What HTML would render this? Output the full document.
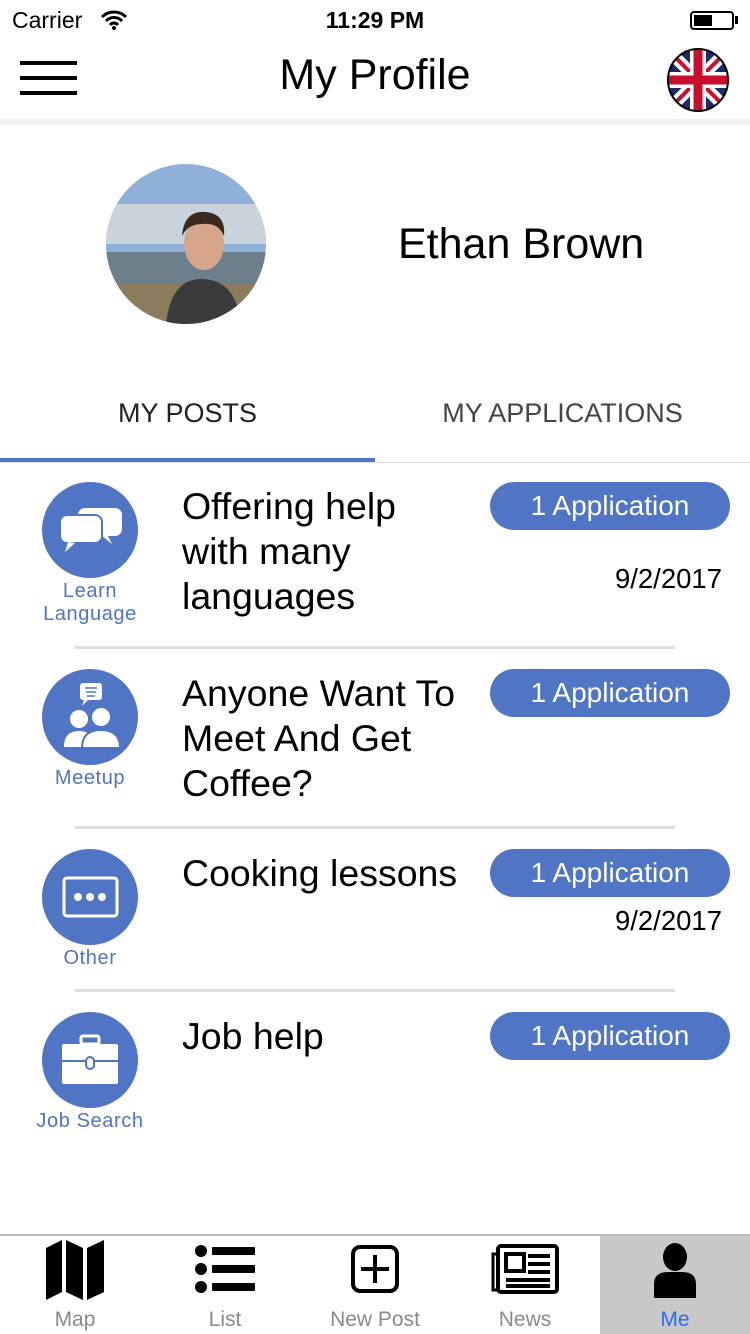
<!DOCTYPE html>
<html><head><meta charset="utf-8"><style>
*{margin:0;padding:0;box-sizing:border-box}
body{width:750px;height:1334px;position:relative;background:#fff;font-family:"Liberation Sans",sans-serif;overflow:hidden}
.a{position:absolute}
.circ{position:absolute;left:42px;width:96px;height:96px;border-radius:50%;background:#5075c4}
.circ svg{position:absolute;left:0;top:0}
.lbl{position:absolute;width:180px;left:0;text-align:center;color:#5075c4;font-size:20px;line-height:23px;letter-spacing:0.6px}
.ttl{position:absolute;left:182px;font-size:37.5px;line-height:45px;color:#000}
.pill{position:absolute;left:490px;width:240px;height:48px;border-radius:24px;background:#5075c4;color:#fff;font-size:28px;line-height:48px;text-align:center}
.date{position:absolute;right:28px;font-size:27.5px}
.sep{position:absolute;left:75px;width:600px;height:3px;background:#dedede}
.tab{position:absolute;top:1236px;width:150px;height:98px;text-align:center}
.tab span{position:absolute;left:0;right:0;top:72px;font-size:21px;color:#8a8a8a}
</style></head><body>
<div class="a" style="left:12px;top:7px;font-size:23px">Carrier</div>
<svg class="a" style="left:100px;top:10px" width="28" height="20" viewBox="0 0 28 20"><path d="M2 7a17 17 0 0 1 24 0M6 11a11 11 0 0 1 16 0M10 15a5 5 0 0 1 8 0" stroke="#000" stroke-width="3" fill="none"/><circle cx="14" cy="18" r="2"/></svg>
<div class="a" style="left:0;width:750px;top:7px;text-align:center;font-size:23px;font-weight:bold">11:29 PM</div>
<div class="a" style="left:690px;top:11px;width:44px;height:19px;border:2px solid #000;border-radius:4px"><div style="position:absolute;left:2px;top:2px;width:18px;height:11px;background:#000"></div></div>
<div class="a" style="left:735px;top:16px;width:3px;height:8px;background:#000"></div>
<div class="a" style="left:20px;top:61px;width:57px;height:4px;background:#000"></div>
<div class="a" style="left:20px;top:76px;width:57px;height:4px;background:#000"></div>
<div class="a" style="left:20px;top:91px;width:57px;height:4px;background:#000"></div>
<div class="a" style="left:0;width:750px;top:51px;text-align:center;font-size:43px">My Profile</div>
<svg class="a" style="left:666px;top:48px" width="64" height="64" viewBox="0 0 64 64"><defs><clipPath id="c"><ellipse cx="32" cy="32" rx="30" ry="31"/></clipPath></defs><g clip-path="url(#c)"><rect width="64" height="64" fill="#1b2a6b"/><path d="M0 0L64 64M64 0L0 64" stroke="#fff" stroke-width="12"/><path d="M0 0L64 64M64 0L0 64" stroke="#c8102e" stroke-width="4"/><path d="M32 0V64M0 32H64" stroke="#fff" stroke-width="16"/><path d="M32 0V64M0 32H64" stroke="#c8102e" stroke-width="9"/></g><ellipse cx="32" cy="32" rx="30" ry="31" fill="none" stroke="#000" stroke-width="2"/></svg>
<div class="a" style="left:0;top:119px;width:750px;height:6px;background:#f2f2f2"></div>
<svg class="a" style="left:106px;top:164px" width="160" height="160" viewBox="0 0 160 160"><defs><clipPath id="av"><circle cx="80" cy="80" r="80"/></clipPath></defs><g clip-path="url(#av)"><rect width="160" height="160" fill="#8fb0d8"/><rect y="40" width="160" height="40" fill="#c9d3dc"/><rect y="88" width="160" height="72" fill="#6e7f8c"/><rect y="120" width="160" height="40" fill="#8a7c5c"/><path d="M60 160q5-45 35-45q35 0 40 45z" fill="#3b3b3e"/><ellipse cx="98" cy="80" rx="20" ry="26" fill="#d6a58a"/><path d="M76 72q2-26 24-24q20 2 18 24q-6-14-22-12q-14 0-20 12z" fill="#3a2a20"/></g></svg>
<div class="a" style="left:398px;top:220px;font-size:43px">Ethan Brown</div>
<div class="a" style="left:0;width:375px;top:398px;text-align:center;font-size:27px;color:#222">MY POSTS</div>
<div class="a" style="left:375px;width:375px;top:398px;text-align:center;font-size:27px;color:#444">MY APPLICATIONS</div>
<div class="a" style="left:0;top:458px;width:375px;height:4px;background:#5075c4"></div>
<div class="a" style="left:0;top:462px;width:750px;height:1px;background:#ddd"></div>

<div class="circ" style="top:482px"><svg width="96" height="96" viewBox="0 0 96 96"><rect x="36" y="26" width="44" height="28" rx="7" fill="#fff"/><path d="M66 54l4 8 -10-8z" fill="#fff"/><rect x="18" y="33" width="42" height="28" rx="7" fill="#fff" stroke="#5075c4" stroke-width="2"/><path d="M26 60l-3 10 10-9z" fill="#fff"/></svg></div>
<div class="lbl" style="top:580px">Learn<br>Language</div>
<div class="ttl" style="top:484px">Offering help<br>with many<br>languages</div>
<div class="pill" style="top:482px">1 Application</div>
<div class="date" style="top:563px">9/2/2017</div>
<div class="sep" style="top:646px"></div>

<div class="circ" style="top:669px"><svg width="96" height="96" viewBox="0 0 96 96"><rect x="38" y="14" width="22" height="17" rx="3" fill="#fff"/><path d="M42 31l-2 6 6-6z" fill="#fff"/><path d="M43 19h12M44 23h10M45 27h8" stroke="#5075c4" stroke-width="1.5"/><circle cx="37" cy="50" r="9" fill="#fff"/><path d="M22 78q0-16 15-16q15 0 15 16z" fill="#fff"/><circle cx="59" cy="48" r="10" fill="#fff" stroke="#5075c4" stroke-width="2"/><path d="M40 79q0-18 19-18q19 0 19 18z" fill="#fff" stroke="#5075c4" stroke-width="2"/></svg></div>
<div class="lbl" style="top:767px">Meetup</div>
<div class="ttl" style="top:671px">Anyone Want To<br>Meet And Get<br>Coffee?</div>
<div class="pill" style="top:669px">1 Application</div>
<div class="sep" style="top:826px"></div>

<div class="circ" style="top:849px"><svg width="96" height="96" viewBox="0 0 96 96"><rect x="22" y="29" width="53" height="38" rx="3" fill="none" stroke="#fff" stroke-width="3"/><circle cx="36" cy="48" r="4" fill="#fff"/><circle cx="48" cy="48" r="4" fill="#fff"/><circle cx="60" cy="48" r="4" fill="#fff"/></svg></div>
<div class="lbl" style="top:947px">Other</div>
<div class="ttl" style="top:851px">Cooking lessons</div>
<div class="pill" style="top:849px">1 Application</div>
<div class="date" style="top:905px">9/2/2017</div>
<div class="sep" style="top:989px"></div>

<div class="circ" style="top:1012px"><svg width="96" height="96" viewBox="0 0 96 96"><rect x="39" y="24" width="18" height="8" rx="2" fill="none" stroke="#fff" stroke-width="3"/><rect x="20" y="32" width="56" height="40" rx="2" fill="#fff"/><path d="M20 49h56" stroke="#5075c4" stroke-width="2"/><rect x="44" y="45" width="8" height="12" rx="4" fill="#fff" stroke="#5075c4" stroke-width="2"/></svg></div>
<div class="lbl" style="top:1110px">Job Search</div>
<div class="ttl" style="top:1014px">Job help</div>
<div class="pill" style="top:1012px">1 Application</div>

<div class="a" style="left:0;top:1234px;width:750px;height:2px;background:#bbb"></div>
<div class="tab" style="left:0"><svg style="margin-top:4px" width="62" height="60" viewBox="0 0 62 60"><path d="M2 8l16-8v52l-16 8z M22 0l17 8v52l-17-8z M43 8l17-8v52l-17 8z"/></svg><span>Map</span></div>
<div class="tab" style="left:150px"><svg style="margin-top:8px" width="62" height="50" viewBox="0 0 62 50"><circle cx="7" cy="7" r="6"/><circle cx="7" cy="25" r="6"/><circle cx="7" cy="43" r="6"/><rect x="18" y="3" width="43" height="8" rx="1"/><rect x="18" y="21" width="43" height="8" rx="1"/><rect x="18" y="39" width="43" height="8" rx="1"/></svg><span>List</span></div>
<div class="tab" style="left:300px"><svg style="margin-top:8px" width="50" height="50" viewBox="0 0 50 50"><rect x="3" y="3" width="44" height="44" rx="7" fill="none" stroke="#000" stroke-width="4"/><path d="M25 11v28M11 25h28" stroke="#000" stroke-width="4"/></svg><span>New Post</span></div>
<div class="tab" style="left:450px"><svg style="margin-top:8px" width="70" height="50" viewBox="0 0 70 50"><rect x="8" y="2" width="59" height="46" rx="3" fill="none" stroke="#000" stroke-width="4"/><path d="M8 10h-5v36h5" fill="none" stroke="#000" stroke-width="3"/><rect x="16" y="10" width="18" height="17" fill="none" stroke="#000" stroke-width="4"/><path d="M38 12h22M38 20h22M38 28h22M16 36h44M16 42h44" stroke="#000" stroke-width="4"/></svg><span>News</span></div>
<div class="tab" style="left:600px;background:#c8c8c8"><svg style="margin-top:6px" width="50" height="56" viewBox="0 0 50 56"><ellipse cx="25" cy="15" rx="12" ry="14"/><path d="M4 56v-14q0-12 14-12h14q14 0 14 12v14z"/></svg><span style="color:#2a6ef0">Me</span></div>
</body></html>
